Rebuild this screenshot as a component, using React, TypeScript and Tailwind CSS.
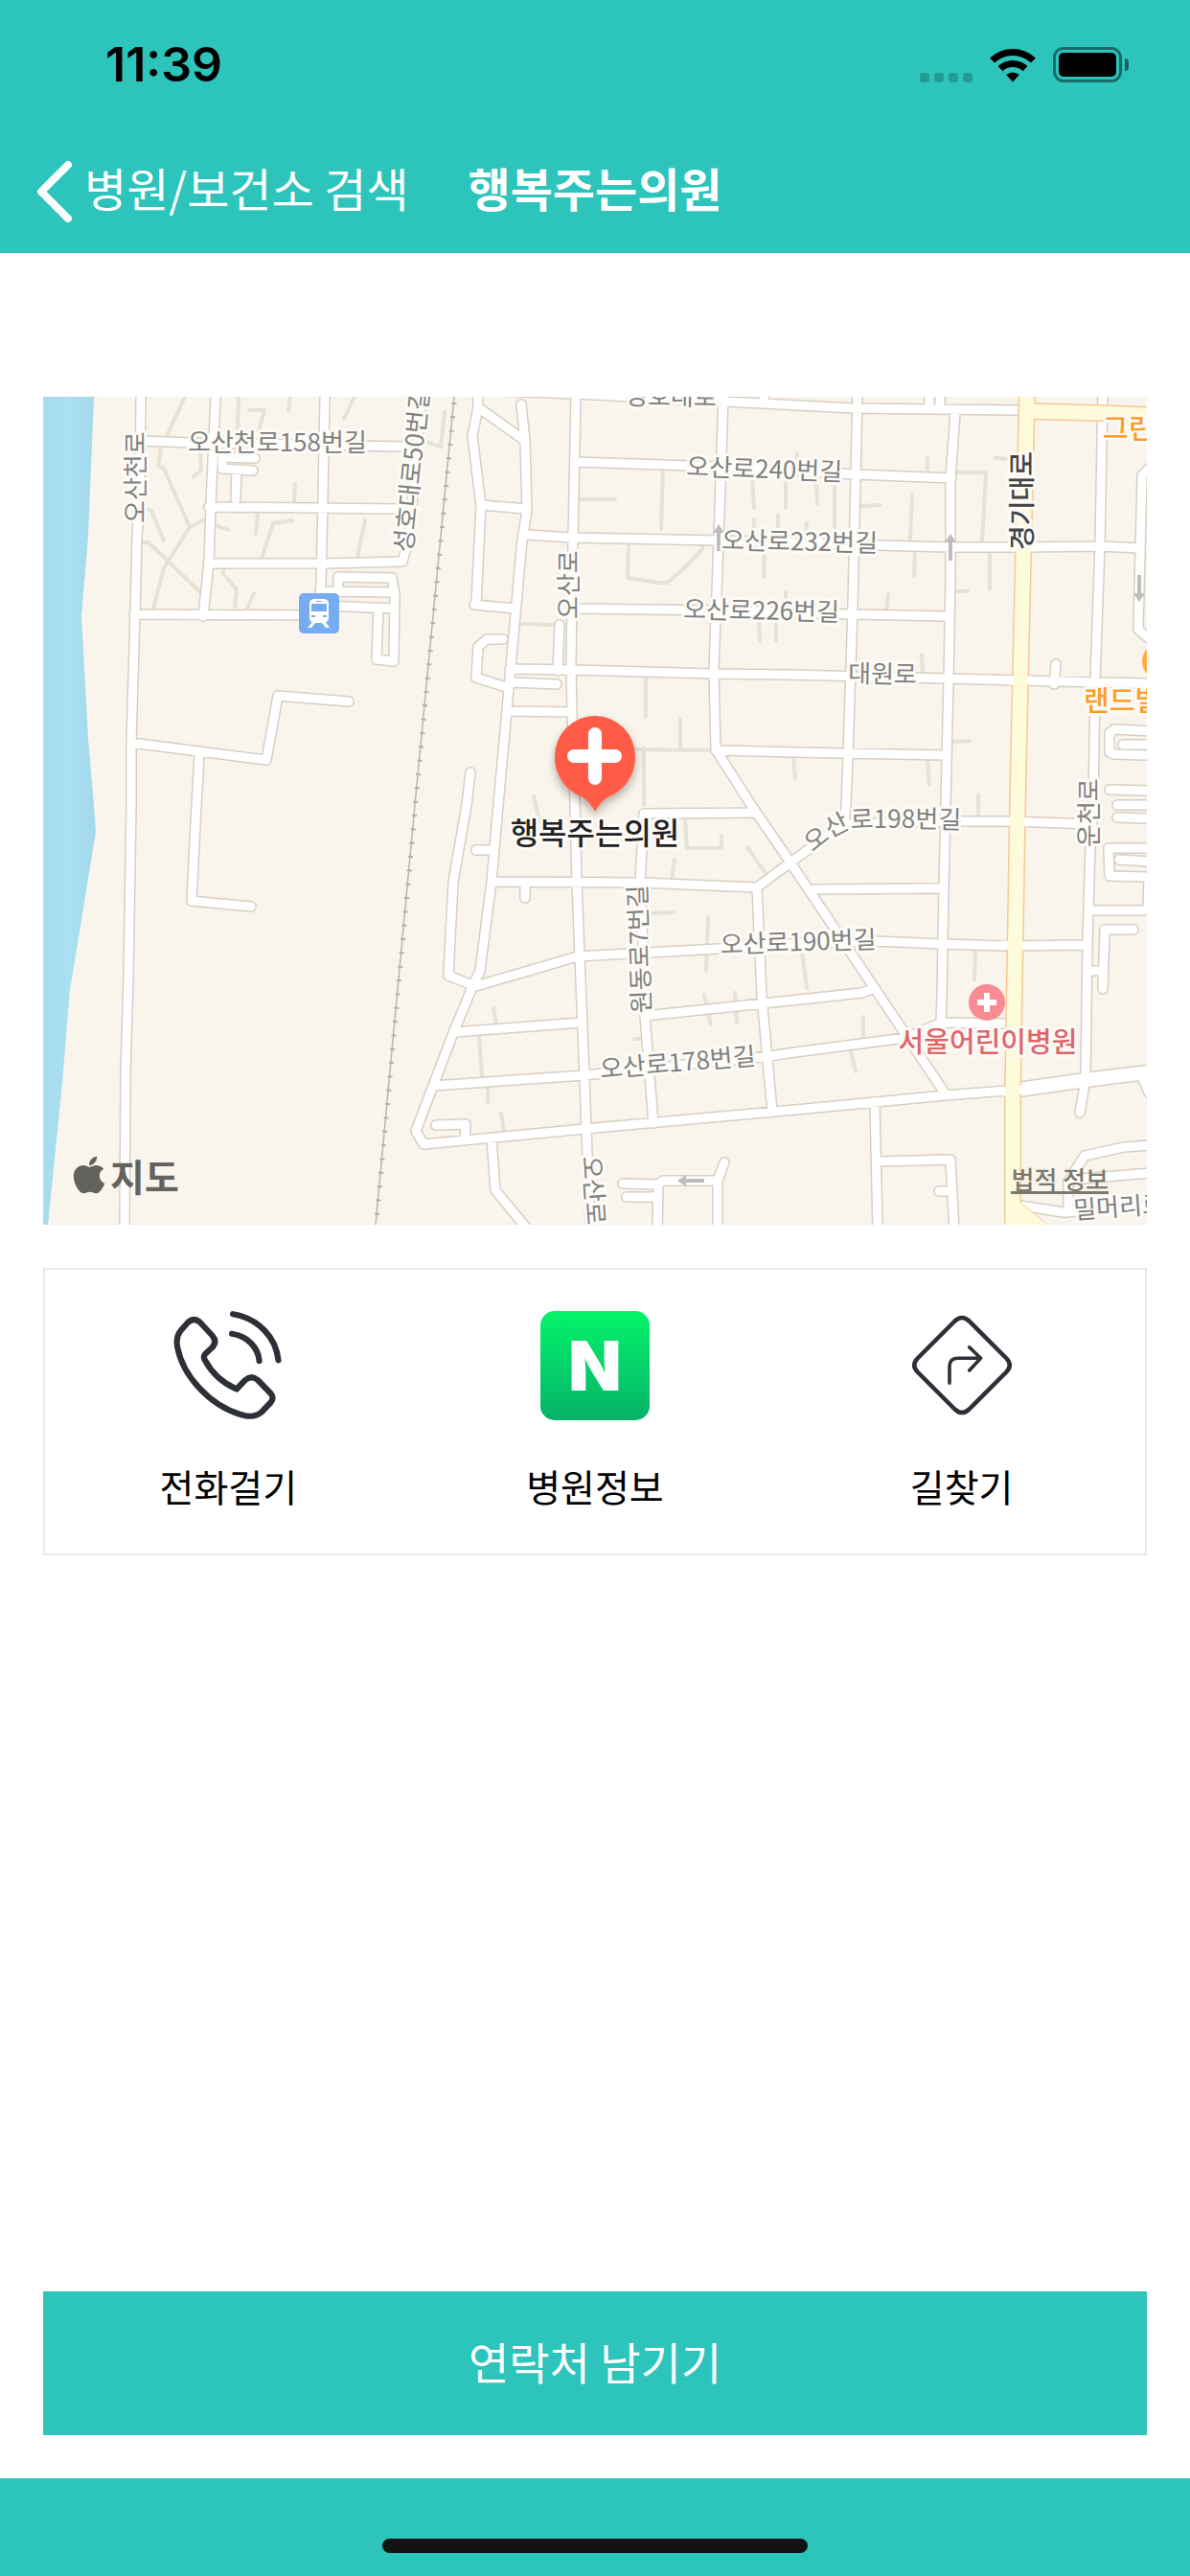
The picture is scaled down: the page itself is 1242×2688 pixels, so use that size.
import React from 'react';
import { FaApple } from 'react-icons/fa';

// Streets are drawn twice: once as a wide casing, once as the white surface.
const streets: string[] = [
  'M147 414L146 517L143 560L141 640L137 775L137 840L134 1020L131 1120L130 1278',
  'M148 460L200 462L423 466',
  'M225 414L220 527L218 587L212 643',
  'M339 414L337 520L335 610L334 620',
  'M218 529L417 531',
  'M217 588L340 588L420 586L427 560L440 414',
  'M140 641L323 642',
  'M266 478L232 477L232 489L264 491',
  'M247 490L246 521',
  'M334 617L412 618',
  'M353 617L353 602L409 603L412 620L411 690L393 688L395 635',
  'M340 632L412 635',
  'M137 775L278 793L290 726L364 732',
  'M208 787L205 840L200 940L262 946',
  'M498 405L499 425L493 455L502 527L497 630',
  'M495 631L538 635',
  'M499 425L548 460',
  'M544 422L548 460L550 533L545 563L530 730L520 840L513 920L501 1013L493 1030L473 1078L452 1133L434 1180L442 1194L610 1178L830 1158L987 1143L1050 1138',
  'M502 527L550 531',
  'M498 407L600 411L758 419L890 426L1065 428',
  'M601 414L598 563L596 693L597 743L600 840L602 920L605 997L610 1123L612 1180L616 1278',
  'M601 482L750 487L893 495L993 499',
  'M550 558L598 561L750 564L917 569L990 571L1067 571L1148 570L1190 572',
  'M598 635L750 637L890 641L987 643',
  'M532 698L600 699L745 703L820 704L990 708L1065 710L1145 712L1200 713',
  'M584 652L582 700',
  'M533 712L581 714',
  'M530 742L597 743',
  'M525 667L508 667L499 675L497 707L528 717',
  'M755 414L750 563L745 700L747 782L784 840L825 900L987 1142',
  'M747 783L830 785L987 788',
  'M797 408L797 420',
  'M491 806L487 840L473 920L468 1018L493 1028',
  'M497 887L515 887',
  'M513 920L670 921L790 926L825 900L880 860L987 857L1053 857L1140 860',
  'M548 921L548 937',
  'M787 848L672 849L668 921L672 1007L673 1060L682 1172',
  'M493 1030L603 998L750 990L820 985L913 982L983 985L1050 987L1133 986',
  'M475 1077L607 1067',
  'M452 1133L610 1122L803 1102L830 1098L945 1083L983 1067L1050 1068',
  'M673 1060L797 1047L900 1036L913 1031',
  'M790 926L795 1040L806 1160',
  'M455 1174L486 1173L485 1190',
  'M513 1188L517 1242L550 1282',
  'M650 1235L687 1236L692 1232L749 1232L756 1213',
  'M749 1232L749 1284',
  'M687 1236L686 1284',
  'M654 1249L686 1249',
  'M895 408L890 633L885 790L883 840L881 860',
  'M970 408L970 427',
  'M981 408L981 427',
  'M997 430L992 500L992 600L990 710L987 840L985 927L983 1040L982 1067',
  'M1151 408L1148 567L1143 710L1141 840L1138 883L1135 983L1133 1123',
  'M1132 1132L1127 1161',
  'M1200 488L1192 496L1188 657L1200 667',
  'M1102 693L1100 714',
  'M1200 763L1163 761L1158 765L1158 785L1162 787L1200 788',
  'M1172 777L1200 777',
  'M1158 824L1200 825',
  'M1166 840L1200 840',
  'M1166 853L1200 854',
  'M1200 885L1157 885L1158 914L1200 915',
  'M1168 897L1200 899',
  'M1137 950L1200 950',
  'M1199 915L1198 947',
  'M1183 970L1153 970L1151 1032',
  'M1137 1013L1151 1013',
  'M980 927L850 928',
  'M913 1150L916 1284',
  'M916 1212L992 1210L996 1284',
  'M980 1243L993 1243',
  'M1200 1195L1173 1197L1132 1206L1115 1233L1115 1265',
  'M1117 1231L1200 1224',
  'M1065 1258L1110 1265L1200 1258',
  'M1193 1126L1199 1140',
];

const alleys: string[] = [
  'M193 414L174 455',
  'M168 467L165 486L171 489L198 550L212 543',
  'M223 547L238 553',
  'M198 550L171 593L160 635',
  'M153 531L158 533L171 564',
  'M148 566L155 566L209 618',
  'M249 414L248 450',
  'M260 428L276 428L270 450',
  'M303 414L301 429',
  'M370 414L359 437',
  'M209 470L210 491L202 497',
  'M308 505L307 525',
  'M269 535L267 557',
  'M305 543L285 546L273 583',
  'M381 543L373 582',
  'M233 593L233 599L247 615L245 633',
  'M265 619L257 637',
  'M464 430L460 466L445 461',
  'M605 521L642 521',
  'M692 490L690 552',
  'M656 567L655 603L687 608L697 608L715 592L733 573L733 568',
  'M543 651L578 652',
  'M674 705L674 748',
  'M710 750L710 783',
  'M655 782L742 783',
  'M672 780L672 840',
  'M785 497L787 530',
  'M820 500L820 530',
  'M787 542L787 553',
  'M812 537L812 550',
  'M798 573L797 602',
  'M820 618L820 630',
  'M792 647L793 669',
  'M810 647L810 668',
  'M828 790L830 813',
  'M557 831L563 857',
  'M715 855L717 885L753 885L753 872',
  'M704 897L701 917',
  'M780 884L800 913',
  'M678 953L703 952',
  'M739 957L737 1013',
  'M515 1052L518 1068',
  'M500 1082L503 1123',
  'M509 1133L509 1150',
  'M523 1162L526 1180',
  'M735 1038L742 1069',
  'M767 1036L769 1067',
  'M662 1084L669 1084',
  'M832 473L831 480',
  'M968 477L968 492',
  'M1038 478L1052 479',
  'M999 493L1029 493L1025 565',
  'M852 500L853 526',
  'M871 507L871 550',
  'M898 528L919 527',
  'M952 516L950 563',
  'M842 546L841 555',
  'M955 575L954 601',
  'M1033 577L1033 615',
  'M997 617L1010 617',
  'M927 620L925 636',
  'M962 683L963 702',
  'M994 774L1012 773',
  'M968 793L970 819',
  'M1021 829L1021 852',
  'M1018 992L1017 1022',
  'M837 993L842 1031',
  'M901 1061L901 1085',
  'M888 1097L893 1118',
];

interface StreetLabel {
  text: string;
  x: number;
  y: number;
  angle: number;
}

const streetLabels: StreetLabel[] = [
  { text: '오산천로158번길', x: 196, y: 471, angle: 0 },
  { text: '오산천로', x: 151, y: 546, angle: -90 },
  { text: '성호대로50번길', x: 430, y: 577, angle: -84 },
  { text: '성호대로', x: 652, y: 422, angle: 1 },
  { text: '오산로240번길', x: 716, y: 496, angle: 2 },
  { text: '오산로232번길', x: 753, y: 573, angle: 1 },
  { text: '오산로226번길', x: 713, y: 645, angle: 1 },
  { text: '오산로', x: 603, y: 646, angle: -90 },
  { text: '대원로', x: 885, y: 712, angle: 1 },
  { text: '오산로190번길', x: 752, y: 995, angle: -2 },
  { text: '오산로178번길', x: 627, y: 1125, angle: -5 },
  { text: '원동로7번길', x: 679, y: 1057, angle: -92 },
  { text: '오산로', x: 608, y: 1207, angle: 86 },
  { text: '운천로', x: 1146, y: 884, angle: -90 },
  { text: '밀머리로', x: 1121, y: 1272, angle: -4 },
];

const arrows = [
  { x: 750, y: 547, angle: 0 },
  { x: 992, y: 557, angle: 0 },
  { x: 1189, y: 628, angle: 180 },
  { x: 707, y: 1232, angle: -90 },
];

const halo = { stroke: '#fdfbf7', strokeWidth: 6, strokeLinejoin: 'round', paintOrder: 'stroke' } as const;

const MapCanvas: React.FC = () => (
  <svg className="block w-full" viewBox="45 414 1152 864" role="img" aria-label="행복주는의원 지도">
    <defs>
      <linearGradient id="water" x1="0" x2="1" y1="0" y2="0">
        <stop offset="0" stopColor="#a6dcee" />
        <stop offset="0.5" stopColor="#abdff2" />
        <stop offset="1" stopColor="#a3d9ea" />
      </linearGradient>
      <filter id="pinShadow" x="-30%" y="-30%" width="160%" height="160%">
        <feDropShadow dx="0" dy="5" stdDeviation="5" floodColor="#000" floodOpacity="0.3" />
      </filter>
      <path id="curve198" d="M848 890Q870 871 884 866Q896 862 1020 865" />
    </defs>

    <rect x="45" y="414" width="1152" height="864" fill="#f9f5ec" />
    <path d="M45 414H98L92 560L85 643L92 770L98 840L100 868L73 1033L65 1130L50 1278H45z" fill="url(#water)" />

    <g fill="none" strokeLinecap="round" strokeLinejoin="round">
      <path d={alleys.join('')} stroke="#e3e3d6" strokeWidth="4" />
      <path d={streets.join('')} stroke="#d8cec3" strokeWidth="12" />
      <path d="M1063 1137L1133 1127L1205 1118" stroke="#d8cec3" strokeWidth="17" />
      <path d={streets.join('')} stroke="#fff" strokeWidth="9" />
      <path d="M1063 1137L1133 1127L1205 1118" stroke="#fff" strokeWidth="14" />
    </g>

    <g fill="none">
      <path d="M1072 408L1068 577L1062 840L1057 1140L1057 1284M1072 429L1148 431L1200 433" stroke="#f9c795" strokeWidth="18" />
      <path d="M1057 571L1080 571M1053 710L1077 710M1050 857L1074 858M1045 986L1070 987M1045 1139L1069 1137" stroke="#fff" strokeWidth="9" />
      <path d="M1062 1252L1095 1279L1048 1279z" fill="#fdfbda" stroke="#f9c795" />
      <path d="M1072 408L1068 577L1062 840L1057 1140L1057 1284M1072 429L1148 431L1200 433" stroke="#fdfbda" strokeWidth="15" />
    </g>

    {/* railway */}
    <path d="M474 414L433 840L392 1278" fill="none" stroke="#b5b5b5" strokeWidth="1.5" />
    <path d="M474 420L433 846L392 1284" fill="none" stroke="#b0b0b0" strokeWidth="5" strokeDasharray="2 12.4" />

    {arrows.map((arrow, index) => (
      <path
        key={index}
        d="M0 0L6 9H2V28H-2V9H-6z"
        fill="#bdbdbd"
        transform={`translate(${arrow.x} ${arrow.y}) rotate(${arrow.angle})`}
      />
    ))}

    <g fontSize="26" fontWeight="400" fill="#808080" {...halo}>
      {streetLabels.map((label, index) => (
        <text key={index} transform={`translate(${label.x} ${label.y}) rotate(${label.angle})`}>
          {label.text}
        </text>
      ))}
      <text>
        <textPath href="#curve198">오산로198번길</textPath>
      </text>
    </g>

    <text transform="translate(1077 574) rotate(-90)" fontSize="28" fontWeight="500" fill="#444" {...halo}>경기대로</text>

    {/* station */}
    <rect x="312" y="619" width="42" height="42" rx="5" fill="#77abf2" />
    <path d="M327 625h12q4 1 4 5v15q0 3-3 4l4 6h-4l-4-5h-7l-4 5h-4l5-6q-3-1-3-4v-15q0-4 4-5z" fill="#fff" />
    <path d="M325 630h16v8h-16zM325 642h4v2h-4zM337 642h4v2h-4zM330 627h6v1h-6z" fill="#77abf2" />

    {/* nearby places */}
    <g fontSize="29" fontWeight="500" fill="#fd9c28" {...halo}>
      <circle cx="1211" cy="690" r="19" fill="#ffac3c" stroke="none" />
      <text x="1151" y="458">그린</text>
      <text x="1131" y="742">랜드빌</text>
    </g>
    <circle cx="1030" cy="1046" r="19" fill="#fb8b93" />
    <path d="M1027 1036h6v7h7v6h-7v7h-6v-7h-7v-6h7z" fill="#fff" />
    <text x="1031" y="1098" fontSize="29" fontWeight="500" fill="#e0656b" textAnchor="middle" {...halo}>서울어린이병원</text>

    {/* selected clinic */}
    <path
      d="M621 847C618 841 614 836 608 832A44 44 0 0 1 579 789A42 42 0 0 1 663 789A44 44 0 0 1 634 832C628 836 624 841 621 847z"
      fill="#ff5b47"
      filter="url(#pinShadow)"
    />
    <path d="M599 789H642M621 766V812" stroke="#fff" strokeWidth="14" strokeLinecap="round" />
    <text x="621" y="881" fontSize="32" fontWeight="500" fill="#222" textAnchor="middle" {...halo}>행복주는의원</text>
  </svg>
);

const StatusBar: React.FC = () => (
  <div className="flex h-[135px] items-center justify-between pl-[110px] pr-16 text-black">
    <span className="font-['Inter',sans-serif] text-[50px] font-semibold">11:39</span>
    <div className="flex items-center">
      <div className="mr-[18px] flex gap-[5px] self-end">
        <span className="size-[10px] rounded-[3px] bg-black/20" />
        <span className="size-[10px] rounded-[3px] bg-black/20" />
        <span className="size-[10px] rounded-[3px] bg-black/20" />
        <span className="size-[10px] rounded-[3px] bg-black/20" />
      </div>
      <svg className="mr-[18px] h-9 w-12" viewBox="0 0 48 36">
        <path d="M0 10.500A35 35 0 0 1 48 10.500L43 15.500A28 28 0 0 0 5 15.500z" />
        <path d="M8.500 19A23 23 0 0 1 39.500 19L34.500 24.200A15.500 15.500 0 0 0 13.500 24.200z" />
        <path d="M17.200 28A10.500 10.500 0 0 1 30.800 28L24 35.500z" />
      </svg>
      <div className="h-[37px] w-[72px] rounded-[11px] border-3 border-black/45 p-[3px]">
        <div className="h-full rounded-[5px] bg-black" />
      </div>
      <div className="ml-[3px] h-[13px] w-1 rounded-r-full bg-black/50" />
    </div>
  </div>
);

const PhoneIcon: React.FC = () => (
  <svg className="size-[114px]" viewBox="0 0 114 114" fill="none" stroke="#2d3037" strokeWidth="6.200" strokeLinecap="round" strokeLinejoin="round">
    <path d="M15.500 11.500Q21.500 6.500 27.500 11.500L40 25Q46.500 32 40 38.500L33.500 44.500Q30.500 47.500 33 51.500C40 64.500 51 75 66 81.500L75 72Q81.500 66.500 88 72L101.500 86Q105.500 90.500 101.500 95.500L92 105.500Q84 112.500 70 108C38 98.500 10 68 4.200 38Q2 27 8 20z" />
    <path d="M62 3.200C88 7.500 107 27 109.500 51.300" />
    <path d="M61 23.700C77 26 88.500 38 89.600 52" />
  </svg>
);

const DirectionsIcon: React.FC = () => (
  <svg className="size-[114px]" viewBox="0 0 114 114" fill="none" stroke="#2d3037" strokeWidth="4.500" strokeLinecap="round" strokeLinejoin="round">
    <path d="M49.500 10.500Q57 3.500 64.500 10.500L103.500 49.500Q110 56.500 103.500 63.500L64.500 102.500Q57 109.500 49.500 102.500L10.500 63.500Q4 56.500 10.500 49.500z" />
    <path strokeWidth="3.600" d="M44 75.300V58Q44 49.300 52.500 49.300H76.600M64.700 37.700L76.600 49.300L64.700 62" />
  </svg>
);

const NaverIcon: React.FC = () => (
  <span className="flex size-[114px] items-center justify-center rounded-[15px] bg-linear-to-b from-[#04f469] to-[#06b268] font-['Inter',sans-serif] text-7xl font-black text-white">
    N
  </span>
);

const actions = [
  { id: 'call', label: '전화걸기', icon: <PhoneIcon /> },
  { id: 'info', label: '병원정보', icon: <NaverIcon /> },
  { id: 'route', label: '길찾기', icon: <DirectionsIcon /> },
];

const App: React.FC = () => {
  return (
    <div className="flex min-h-screen flex-col bg-white font-['Noto_Sans_CJK_KR',sans-serif] text-black">
      <header className="bg-[#2dc4bc]">
        <StatusBar />
        <nav className="grid h-[129px] grid-cols-[1fr_auto_1fr] items-center text-white">
          <button type="button" className="flex items-center gap-3 pl-9 text-5xl leading-none">
            <svg className="h-[66px] w-10" viewBox="0 0 40 66" fill="none" stroke="currentColor" strokeWidth="8" strokeLinecap="round" strokeLinejoin="round">
              <path d="M35 5L7 33L35 61" />
            </svg>
            <span className="pb-2.5 whitespace-nowrap">병원/보건소 검색</span>
          </button>
          <h1 className="pb-2.5 text-5xl leading-none font-bold">행복주는의원</h1>
        </nav>
      </header>

      <main className="flex flex-1 flex-col px-[45px] pt-[150px] pb-[45px]">
        <section className="relative">
          <MapCanvas />
          <div className="absolute bottom-[30px] left-[26px] flex items-center text-[39px] leading-none font-bold text-[#63625d]">
            <FaApple className="size-11" />
            지도
          </div>
          <a href="#legal" className="absolute right-10 bottom-8 border-b-3 border-[#7a796f] text-[26px] leading-none font-medium text-[#7a796f]">
            법적 정보
          </a>
        </section>

        <section className="mt-[45px] grid grid-cols-3 border-2 border-[#e8e8e8]">
          {actions.map((action) => (
            <button key={action.id} type="button" className="flex flex-col items-center gap-12 pt-[43px] pb-[51px]">
              {action.icon}
              <span className="text-[39px] leading-10">{action.label}</span>
            </button>
          ))}
        </section>

        <button type="button" className="mt-auto h-[150px] bg-[#2dc4bc] pb-1.5 text-[46px] text-white">
          연락처 남기기
        </button>
      </main>

      <footer className="flex justify-center bg-[#2dc4bc] pt-[63px] pb-6">
        <div className="h-[15px] w-[444px] rounded-full bg-[#131313]" />
      </footer>
    </div>
  );
};

export default App;
